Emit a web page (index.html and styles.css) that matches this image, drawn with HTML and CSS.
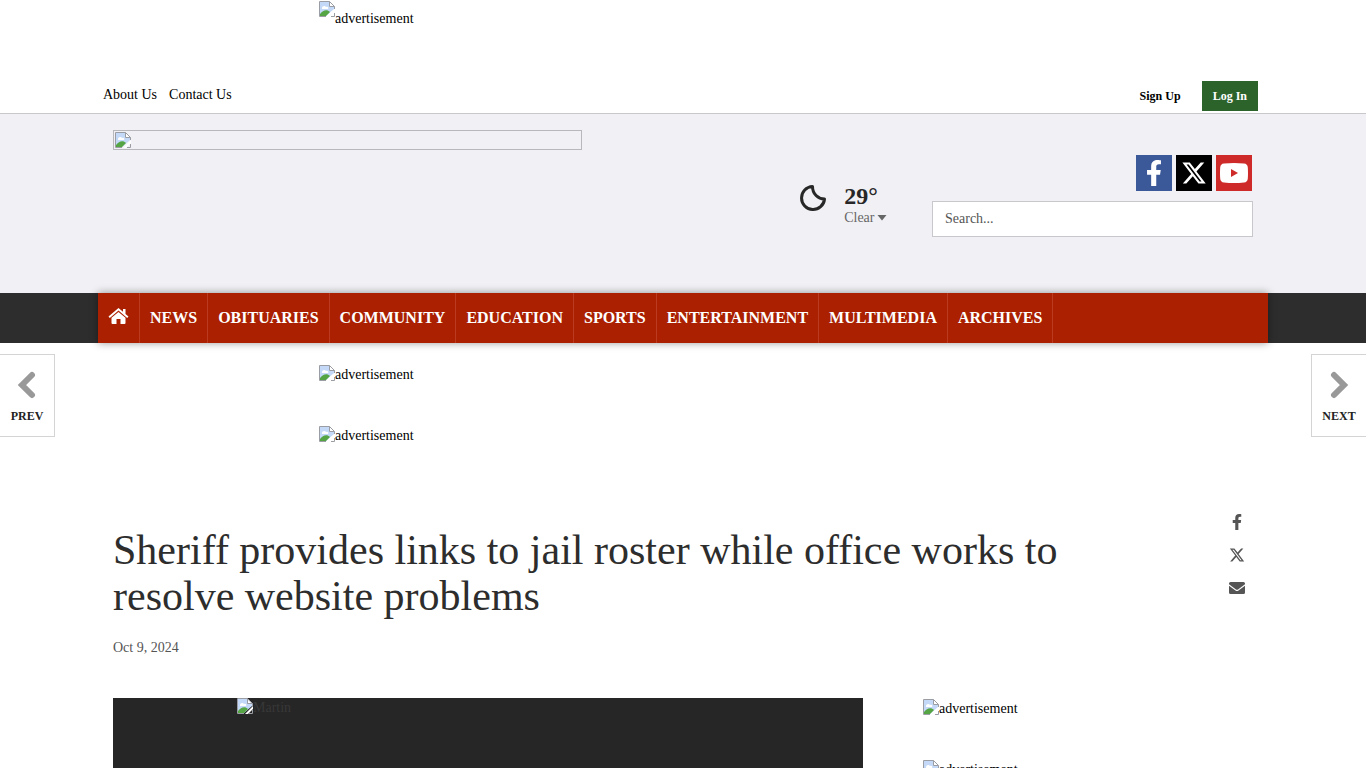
FILE: index.html
```html
<!DOCTYPE html>
<html lang="en">
<head>
<meta charset="utf-8">
<title>Sheriff provides links to jail roster while office works to resolve website problems</title>
<link rel="stylesheet" href="styles.css">
</head>
<body>
<svg class="defs" aria-hidden="true">
  <symbol id="missing" viewBox="0 0 16 16">
    <path d="M1 1h9.500v4.500H15V8l-8 7H1z" fill="#c3d9f7"/>
    <path d="M3 7c0-2 3-3 4-1 2-1 3 1 2 2H3z" fill="#fff"/>
    <path d="M1 15v-2c3-4 7-5 10-2l-4 4z" fill="#55a545"/>
    <path d="M10.500 1v4.500H15z" fill="#fff"/>
    <path d="M.5 15.500V.5h10l5 5V8M.5 15.500H7M12 15.500h3.500V12M10.500.5v5h5" fill="none" stroke="#9a9da3"/>
    <path d="M8 16l8-8v3l-5 5z" fill="#fff"/>
  </symbol>
  <symbol id="fb" viewBox="0 0 320 512"><path d="M279 288l14-93h-89v-60c0-25 12-50 52-50h41V7s-37-7-72-7c-73 0-121 44-121 125v70H23v93h81v224h100V288z"/></symbol>
  <symbol id="x" viewBox="0 0 24 24"><path d="M18.200 2.200h3.300l-7.200 8.300 8.500 11.200h-6.700l-5.200-6.800-6 6.800H1.700l7.700-8.800L1.300 2.200h6.800l4.700 6.200zm-1.100 17.600h1.800L7.100 4.100h-2z"/></symbol>
</svg>

<div class="ad ad-top"><svg class="missing"><use href="#missing"/></svg><span>advertisement</span></div>

<div class="topbar">
  <div class="wrap topbar-row">
    <nav class="links"><a href="#">About Us</a><a href="#">Contact Us</a></nav>
    <div class="account"><a class="signup" href="#">Sign Up</a><a class="login" href="#">Log In</a></div>
  </div>
</div>

<header class="masthead">
  <div class="wrap masthead-row">
    <a class="logo" href="#" aria-label="Home page"><svg class="missing"><use href="#missing"/></svg></a>
    <div class="weather">
      <svg class="moon" viewBox="0 0 28 28"><path d="M13.500 2.500A11.500 11.500 0 1 0 25.500 15C19 15 13.500 10 13.500 2.500z" fill="none" stroke="#272727" stroke-width="3" stroke-linejoin="round"/></svg>
      <div><div class="temp">29°</div><div class="cond">Clear <svg class="caret" viewBox="0 0 10 6"><path d="M.5 0h9L5 5.500z" fill="currentColor"/></svg></div></div>
    </div>
    <div class="tools">
      <div class="social">
        <a class="s-fb" href="#" aria-label="Facebook"><svg><use href="#fb"/></svg></a>
        <a class="s-x" href="#" aria-label="X"><svg><use href="#x"/></svg></a>
        <a class="s-yt" href="#" aria-label="YouTube"><svg viewBox="0 0 28 20"><path d="M4 .5Q14-.5 24 .5q3.500.3 3.800 4 .4 5.500 0 11-.3 3.700-3.800 4-10 1-20 0-3.500-.3-3.800-4-.4-5.500 0-11Q.5.800 4 .5zM11 6v8l7-4z" fill-rule="evenodd"/></svg></a>
      </div>
      <input class="search" type="search" placeholder="Search..." aria-label="Search">
    </div>
  </div>
</header>

<div class="navbar">
  <nav class="wrap menu">
    <a href="#" aria-label="Home"><svg class="home" viewBox="0 0 20 16"><path d="M10 0 0 8.500l1.300 1.400L10 2.600l8.700 7.300L20 8.500l-3-2.600V1h-2.500v2.800z"/><path d="M3 9.800V15q0 1 1 1h4v-5h4v5h4q1 0 1-1V9.800L10 4z"/></svg></a>
    <a href="#">NEWS</a><a href="#">OBITUARIES</a><a href="#">COMMUNITY</a><a href="#">EDUCATION</a><a href="#">SPORTS</a><a href="#">ENTERTAINMENT</a><a href="#">MULTIMEDIA</a><a href="#">ARCHIVES</a>
  </nav>
</div>

<a class="pager prev" href="#"><svg viewBox="0 0 20 28"><path d="M15 4 5 14l10 10" /></svg><span>PREV</span></a>
<a class="pager next" href="#"><svg viewBox="0 0 20 28"><path d="M5 4l10 10L5 24" /></svg><span>NEXT</span></a>

<main>
  <div class="ads">
    <div class="ad"><svg class="missing"><use href="#missing"/></svg><span>advertisement</span></div>
    <div class="ad"><svg class="missing"><use href="#missing"/></svg><span>advertisement</span></div>
  </div>
  <article class="wrap article">
    <div class="heading">
      <div class="heading-text">
        <h1>Sheriff provides links to jail roster while office works to resolve website problems</h1>
        <time datetime="2024-10-09">Oct 9, 2024</time>
      </div>
      <div class="share">
        <a href="#" aria-label="Share on Facebook"><svg><use href="#fb"/></svg></a>
        <a href="#" aria-label="Share on X"><svg><use href="#x"/></svg></a>
        <a href="#" aria-label="Share by email"><svg viewBox="0 0 16 16"><path d="M0 3.500Q0 2 1.500 2h13Q16 2 16 3.500v.8L9 9.500q-1 .7-2 0L0 4.300z"/><path d="M0 5.800 6.500 10.500q1.500 1 3 0L16 5.800v6.700q0 1.500-1.500 1.500h-13Q0 14 0 12.500z"/></svg></a>
      </div>
    </div>
    <div class="columns">
      <figure class="photo"><svg class="missing"><use href="#missing"/></svg><span>Martin</span></figure>
      <aside class="side">
        <div class="side-ad"><svg class="missing"><use href="#missing"/></svg><span>advertisement</span></div>
        <div class="side-ad"><svg class="missing"><use href="#missing"/></svg><span>advertisement</span></div>
      </aside>
    </div>
  </article>
</main>
</body>
</html>
```
FILE: styles.css
```css
* { box-sizing: border-box; }
body {
  margin: 0;
  height: 100vh;
  overflow: hidden;
  background: #fff;
  color: #000;
  font: 14px/20px "Liberation Serif", "Times New Roman", serif;
}
a { color: inherit; text-decoration: none; }
svg { fill: currentColor; }
.defs { position: absolute; width: 0; height: 0; }
.wrap { max-width: 1170px; margin: 0 auto; }
.missing { flex: none; width: 16px; height: 16px; }

.ad { display: flex; max-width: 728px; height: 61px; margin: 0 auto; }
.ad-top { height: 80px; padding-top: 1px; }
.ad-top span { padding-top: 8px; }

.topbar { border-bottom: 1px solid #c8c8cc; }
.topbar-row { display: flex; justify-content: space-between; height: 33px; padding: 1px 10px 0 5px; }
.links { display: flex; gap: 12px; line-height: 28px; }
.account { display: flex; gap: 21px; font-size: 12px; font-weight: bold; line-height: 30px; }
.login { height: 30px; padding: 0 11px; background: #2b632b; color: #fff; }

.masthead { background: #f1f1f5; }
.masthead-row { display: flex; height: 179px; padding: 16px 15px 0; }
.logo { display: flex; width: 469px; height: 20px; padding: 1px; border: 1px solid #b8b8bc; }
.weather { display: flex; gap: 17px; margin-left: auto; padding-top: 54px; color: #272727; }
.moon { width: 28px; height: 28px; }
.temp { font-size: 24px; font-weight: bold; line-height: 24px; }
.cond { color: #666; line-height: 20px; }
.caret { width: 10px; height: 6px; margin-left: -1px; vertical-align: 1px; }
.tools { width: 321px; margin-left: 45px; padding-top: 25px; }
.social { display: flex; justify-content: flex-end; gap: 4px; margin-right: 1px; color: #fff; }
.social a { display: flex; align-items: center; justify-content: center; width: 36px; height: 36px; }
.social svg { width: 26px; height: 26px; }
.s-fb { background: #3b5998; }
.s-x { background: #000; }
.s-yt { background: #cd2a29; }
.social .s-yt svg { width: 28px; height: 20px; }
.search {
  display: block;
  width: 100%;
  height: 36px;
  margin-top: 10px;
  padding: 0 12px;
  border: 1px solid #c8c8cc;
  border-radius: 0;
  background: #fff;
  font: inherit;
}
.search::placeholder { color: #555; opacity: 1; }

.navbar { background: #2d2d2d; }
.menu {
  display: flex;
  height: 50px;
  background: #aa2000;
  box-shadow: 0 0 8px rgba(0, 0, 0, .4);
  color: #fff;
  font-size: 16px;
  font-weight: bold;
  line-height: 50px;
}
.menu a { padding: 0 10px; border-right: 1px solid #bb3b20; }
.home { width: 21px; height: 16px; vertical-align: -1px; }

.pager {
  position: absolute;
  top: 354px;
  display: flex;
  flex-direction: column;
  align-items: center;
  width: 55px;
  height: 83px;
  padding-top: 16px;
  border: 1px solid #d4d4d4;
  background: #fff;
  color: #222;
  font-size: 12px;
  font-weight: bold;
}
.pager svg { width: 20px; height: 28px; margin-bottom: 7px; }
.pager path { fill: none; stroke: #999; stroke-width: 6; stroke-linecap: round; }
.prev { left: 0; border-left: 0; }
.next { right: 0; border-right: 0; }

.ads { padding-top: 22px; }
.article { padding: 26px 15px 0; }
.heading { display: flex; justify-content: space-between; }
.heading-text { max-width: 980px; padding-top: 14px; }
h1 { margin: 0 0 19px; color: #2d2d2d; font-size: 42px; font-weight: normal; line-height: 46px; }
time { display: block; color: #555; }
.share { display: flex; flex-direction: column; gap: 17px; padding: 1px 8px 0 0; color: #555; }
.share a { display: flex; }
.share svg { width: 16px; height: 16px; }
.columns { display: flex; gap: 60px; margin-top: 40px; }
.photo { display: flex; width: 750px; height: 420px; margin: 0; padding-left: 124px; background: #262626; color: #383838; }
.side { padding-top: 1px; }
.side-ad { display: flex; height: 61px; }
```
